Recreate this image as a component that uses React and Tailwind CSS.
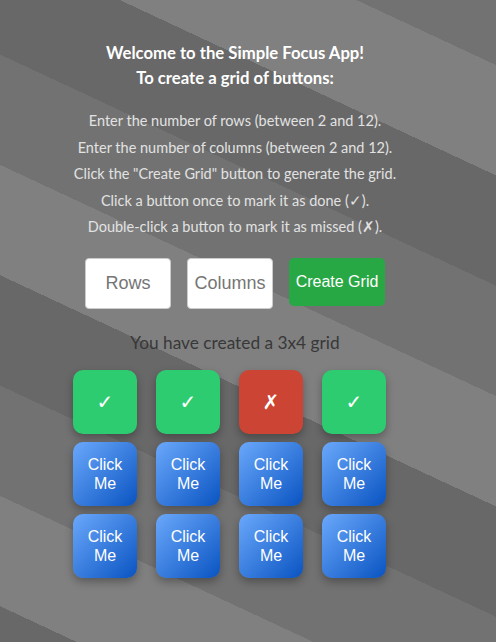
import React, { useState } from 'react';

const instructions = [
    'Enter the number of rows (between 2 and 12).',
    'Enter the number of columns (between 2 and 12).',
    'Click the "Create Grid" button to generate the grid.',
    'Click a button once to mark it as done (\u2713).',
    'Double-click a button to mark it as missed (\u2717).',
];

// first row already marked, rest untouched
const initialCells = [
    'done', 'done', 'missed', 'done',
    'idle', 'idle', 'idle', 'idle',
    'idle', 'idle', 'idle', 'idle',
];

function Cell({ status, onClick, onDoubleClick }) {
    if (status === 'done') {
        return (
            <button onClick={onClick} onDoubleClick={onDoubleClick} className="w-16 h-16 rounded-[10px] bg-[#2ecc71] text-white text-[20px] font-bold font-['DejaVu_Sans',sans-serif] shadow-[0_4px_9px_rgba(0,0,0,0.3)] flex items-center justify-center">
                {'\u2713'}
            </button>
        );
    }
    if (status === 'missed') {
        return (
            <button onClick={onClick} onDoubleClick={onDoubleClick} className="w-16 h-16 rounded-[10px] bg-[#cc4433] text-white text-[20px] font-bold font-['DejaVu_Sans',sans-serif] shadow-[0_4px_9px_rgba(0,0,0,0.3)] flex items-center justify-center">
                {'\u2717'}
            </button>
        );
    }
    return (
        <button onClick={onClick} onDoubleClick={onDoubleClick} className="w-16 h-16 rounded-[10px] bg-[linear-gradient(135deg,#6aa8fb,#0a54c2)] text-white text-[16px] leading-[19px] font-['Liberation_Sans',Arial,sans-serif] shadow-[0_4px_9px_rgba(0,0,0,0.3)] flex items-center justify-center text-center">
            Click<br />Me
        </button>
    );
}

export default function App() {
    const [cells, setCells] = useState(initialCells);

    const mark = (i, value) => {
        setCells(prev => prev.map((c, j) => (j === i ? value : c)));
    };

    return (
        <div className="min-h-screen w-full bg-[repeating-linear-gradient(205deg,#727272_-41px,#727272_59px,#808080_59px,#808080_159px,#686868_159px,#686868_259px)] font-['Lato',sans-serif]">
            <div className="w-[470px] flex flex-col items-center pt-[41px] pb-10">
                <h1 className="text-[16.7px] font-bold text-white text-center leading-[25px]">
                    Welcome to the Simple Focus App!<br />To create a grid of buttons:
                </h1>

                <div className="mt-[17px] text-[14.5px] text-[#e2e2e2] text-center">
                    {instructions.map((line) => (
                        <p key={line} className="leading-[26.5px]">{line}</p>
                    ))}
                </div>

                <div className="flex items-start gap-4 mt-[17px] font-['Liberation_Sans',Arial,sans-serif]">
                    <input type="text" inputMode="numeric" placeholder="Rows" className="w-[86px] h-[51px] bg-white border border-[#cccccc] rounded-[4px] text-center text-[18px] text-[#555] placeholder:text-[#757575] outline-none" />
                    <input type="text" inputMode="numeric" placeholder="Columns" className="w-[86px] h-[51px] bg-white border border-[#cccccc] rounded-[4px] text-center text-[18px] text-[#555] placeholder:text-[#757575] outline-none" />
                    <button className="w-[96px] h-[48px] bg-[#28a745] text-white text-[16px] rounded-[5px]">
                        Create Grid
                    </button>
                </div>

                <p className="mt-[22px] text-[17.3px] text-[#383838] leading-[24px]">You have created a 3x4 grid</p>

                <div className="grid grid-cols-[repeat(4,64px)] gap-x-[19px] gap-y-2 mt-[15px] mr-[11px]">
                    {cells.map((status, i) => (
                        <Cell key={i} status={status} onClick={() => mark(i, 'done')} onDoubleClick={() => mark(i, 'missed')} />
                    ))}
                </div>
            </div>
        </div>
    );
}
